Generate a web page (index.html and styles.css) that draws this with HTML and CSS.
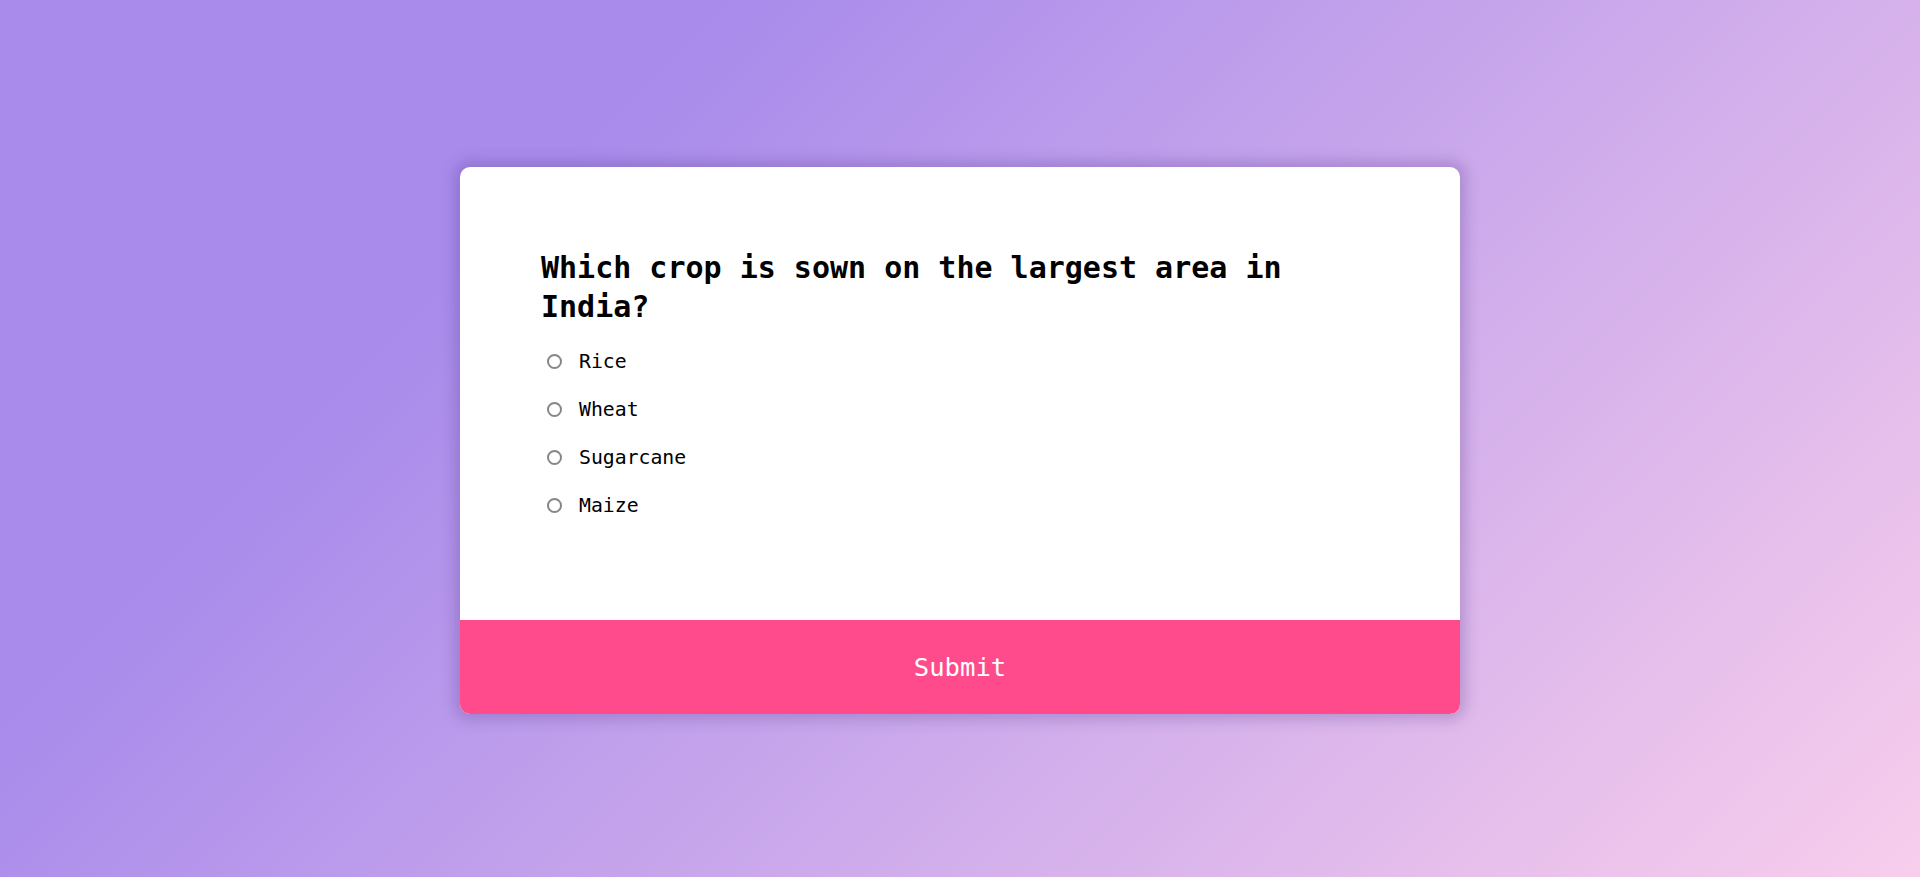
FILE: index.html
```html
<!DOCTYPE html>
<html lang="en">
<head>
<meta charset="UTF-8">
<title>Quiz App</title>
<link rel="stylesheet" href="styles.css">
</head>
<body>
  <div class="quiz-container">
    <div class="quiz-header">
      <h2 class="question">Which crop is sown on the largest area in India?</h2>
      <ul class="answers">
        <li class="answer"><input type="radio" name="answer" id="a" class="radio"><label for="a" class="answer-label">Rice</label></li>
        <li class="answer"><input type="radio" name="answer" id="b" class="radio"><label for="b" class="answer-label">Wheat</label></li>
        <li class="answer"><input type="radio" name="answer" id="c" class="radio"><label for="c" class="answer-label">Sugarcane</label></li>
        <li class="answer"><input type="radio" name="answer" id="d" class="radio"><label for="d" class="answer-label">Maize</label></li>
      </ul>
    </div>
    <button class="submit">Submit</button>
  </div>
</body>
</html>
```
FILE: styles.css
```css
* { box-sizing: border-box; }

html, body { height: 100%; }

body {
  margin: 0;
  padding-top: 3px;
  overflow: hidden;
  display: flex;
  align-items: center;
  justify-content: center;
  background-color: #a88beb;
  background-image: linear-gradient(315deg, #f8ceec 0%, #a88beb 74%);
  font-family: "DejaVu Sans Mono", "Liberation Mono", monospace;
}

.quiz-container {
  width: 1000px;
  background: #fff;
  border-radius: 10px;
  overflow: hidden;
  box-shadow: 0 0 14px 6px rgba(90, 60, 140, 0.28);
}

.quiz-header {
  padding: 81px 80px 80px 81px;
}

.question {
  margin: 0;
  font-size: 30px;
  line-height: 39px;
  font-weight: bold;
  color: #000;
}

.answers {
  list-style: none;
  margin: 24px 0 22px;
  padding: 0;
  display: flex;
  flex-direction: column;
  gap: 24px;
}

.answer {
  display: flex;
  align-items: center;
  font-size: 19.8px;
  line-height: 24px;
  height: 24px;
  color: #000;
}

.radio {
  -webkit-appearance: none;
  appearance: none;
  width: 15px;
  height: 15px;
  margin: 0 0 0 6px;
  border: 2px solid #868689;
  border-radius: 50%;
  background: #fff;
}

.answer-label {
  margin-left: 17px;
}

.submit {
  display: block;
  width: 100%;
  border: none;
  margin: 0;
  background: #ff4b8b;
  color: #fff;
  font-family: inherit;
  font-size: 25.6px;
  line-height: 30px;
  padding: 32px 0;
  cursor: pointer;
}
```
